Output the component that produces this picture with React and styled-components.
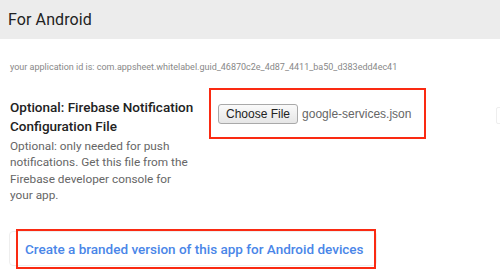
import styled, { createGlobalStyle } from "styled-components";

const GlobalStyle = createGlobalStyle`
  html, body {
    margin: 0;
    padding: 0;
    background: #fff;
  }
  body {
    font-family: Roboto, "Liberation Sans", sans-serif;
  }
`;

const Page = styled.div`
  position: relative;
  width: 500px;
  height: 275px;
  overflow: hidden;
  background: #fff;
`;

const Header = styled.div`
  height: 39px;
  background: #ececec;
  display: flex;
  align-items: center;
  padding-left: 8px;
  font-size: 16px;
  color: #222;
  letter-spacing: 0.1px;
`;

const Body = styled.div`
  padding: 0 10px;
`;

const AppId = styled.div`
  margin-top: 22px;
  font-size: 9px;
  line-height: 12px;
  color: #888;
  white-space: nowrap;
`;

const FieldRow = styled.div`
  display: grid;
  grid-template-columns: 190px auto;
  column-gap: 9px;
  margin-top: 15px;
  align-items: start;
`;

const Label = styled.div`
  padding-top: 10px;
`;

const Title = styled.div`
  font-size: 13.5px;
  font-weight: 500;
  line-height: 18.5px;
  color: #222;
`;

const Hint = styled.div`
  width: 182px;
  font-size: 11.8px;
  line-height: 16.3px;
  color: #666;
  margin-top: 3px;
`;

const Highlight = styled.div`
  border: 2px solid #fa2a12;
  box-sizing: border-box;
  display: flex;
  align-items: center;
`;

const FilePicker = styled(Highlight)`
  width: 217px;
  height: 51px;
  padding-left: 7px;
  gap: 4px;
`;

const FileButton = styled.button`
  font-family: "Liberation Sans", Arial, sans-serif;
  font-size: 12px;
  color: #222;
  height: 20px;
  padding: 0 7px;
  border: 1px solid #a9a9a9;
  border-radius: 3px;
  background: linear-gradient(#fafafa, #e6e6e6);
`;

const FileName = styled.span`
  font-family: "Liberation Sans", Arial, sans-serif;
  font-size: 12px;
  color: #666;
`;

const EdgeField = styled.div`
  position: absolute;
  right: -8px;
  top: 107px;
  width: 10px;
  height: 15px;
  border: 1px solid #eee;
  border-radius: 2px;
`;

const Card = styled.div`
  margin-top: 28px;
  margin-left: -1px;
  width: 368px;
  height: 35px;
  border: 1px solid #eee;
  border-radius: 4px;
  display: flex;
  align-items: center;
  padding-left: 6px;
  box-sizing: border-box;
`;

const LinkBox = styled(Highlight)`
  width: 360px;
  height: 40px;
  padding-left: 7px;
  flex-shrink: 0;
`;

const Link = styled.a`
  color: #4a86e8;
  font-size: 13.5px;
  font-weight: 500;
  text-decoration: none;
  white-space: nowrap;
`;

export default function App() {
  return (
    <Page>
      <GlobalStyle />
      <Header>For Android</Header>
      <Body>
        <AppId>
          your application id is: com.appsheet.whitelabel.guid_46870c2e_4d87_4411_ba50_d383edd4ec41
        </AppId>
        <FieldRow>
          <Label>
            <Title>Optional: Firebase Notification Configuration File</Title>
            <Hint>
              Optional: only needed for push notifications. Get this file from the
              Firebase developer console for your app.
            </Hint>
          </Label>
          <FilePicker>
            <FileButton>Choose File</FileButton>
            <FileName>google-services.json</FileName>
          </FilePicker>
        </FieldRow>
        <Card>
          <LinkBox>
            <Link href="#">Create a branded version of this app for Android devices</Link>
          </LinkBox>
        </Card>
      </Body>
      <EdgeField />
    </Page>
  );
}
